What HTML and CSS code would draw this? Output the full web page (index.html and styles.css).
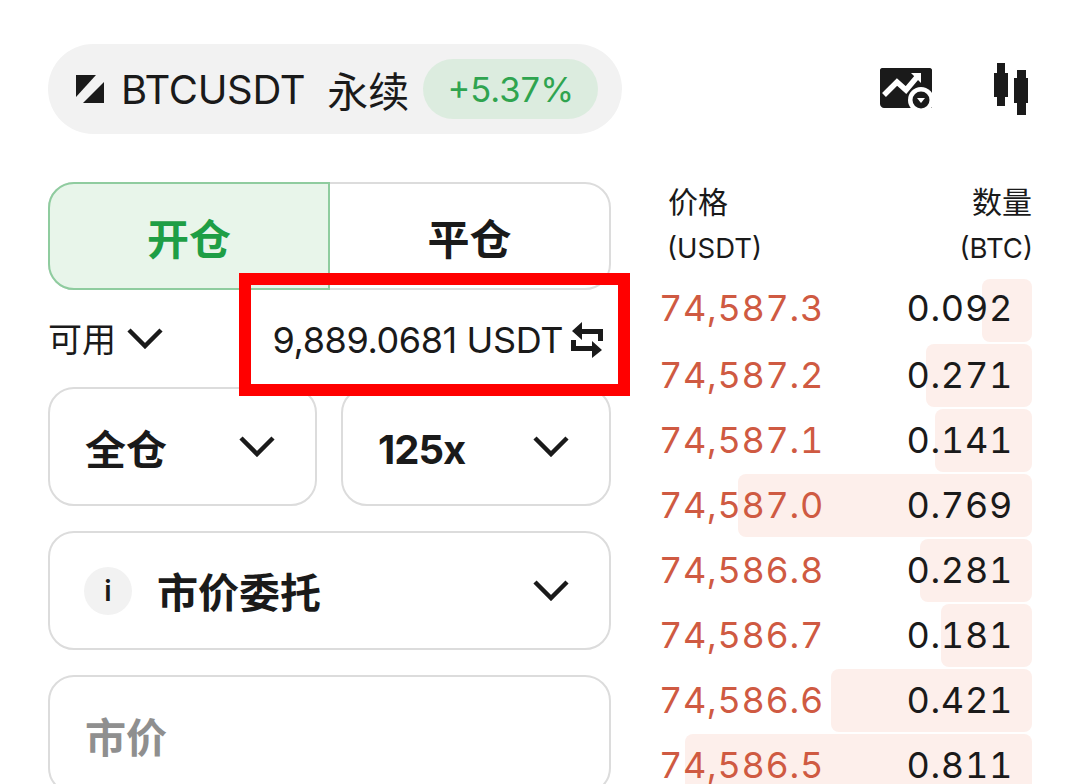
FILE: index.html
```html
<!DOCTYPE html>
<html lang="zh">
<head>
<meta charset="utf-8">
<title>BTCUSDT</title>
<link rel="stylesheet" href="styles.css">
</head>
<body>
<main class="page">
  <header class="top">
    <div class="pill">
      <svg class="logo" viewBox="0 0 28 28"><path d="M0 0H20L0 22Z"/><path d="M28 7V28H7Z"/></svg>
      <span class="sym">BTCUSDT</span>
      <span class="perp">永续</span>
      <span class="badge">+5.37%</span>
    </div>
    <div class="tools">
      <svg class="tool-chart" viewBox="0 0 52 42"><path class="ink" d="M0 2C0 1 1 0 2 0H50C51 0 52 1 52 2V40H4C2 40 0 38 0 36Z"/><circle class="ring" cx="41" cy="32" r="13"/><path class="line" d="M4 27L17 14L26 22L37 9"/><path class="arrowhead" d="M31 5H41V15Z"/><circle class="ink" cx="41" cy="32" r="8.5"/><path class="arrowhead" d="M37 30H45L41 35Z"/></svg>
      <svg class="tool-candle" viewBox="0 0 36 52"><path class="ink" d="M3 0H11V10H14V34H11V43H3V34H0V10H3Z"/><path class="ink" d="M23 7H32V15H34V40H32V52H23V40H20V15H23Z"/></svg>
    </div>
  </header>
  <div class="columns">
    <section class="form">
      <div class="tabs">
        <div class="tab tab-on">开仓</div>
        <div class="tab">平仓</div>
      </div>
      <div class="avail">
        <div class="avail-l">可用<svg class="chev" viewBox="0 0 36 22"><path d="M2 3L18 19L34 3"/></svg></div>
        <div class="avail-r">9,889.0681 USDT<svg class="swap" viewBox="0 0 33 36"><path d="M1 9L11 0V7H32V19H27V12H11V18Z"/><path d="M0 18H5V24H21V19L31 28L21 36V29H0Z"/></svg></div>
      </div>
      <div class="two">
        <div class="field"><b>全仓</b><svg class="chev" viewBox="0 0 36 22"><path d="M2 3L18 19L34 3"/></svg></div>
        <div class="field field-num"><b>125x</b><svg class="chev" viewBox="0 0 36 22"><path d="M2 3L18 19L34 3"/></svg></div>
      </div>
      <div class="field field-order">
        <span class="info">i</span><b class="order-name">市价委托</b><svg class="chev" viewBox="0 0 36 22"><path d="M2 3L18 19L34 3"/></svg>
      </div>
      <div class="field field-market"><b>市价</b></div>
    </section>
    <section class="book">
      <div class="book-head">
        <div><div>价格</div><div class="unit">(USDT)</div></div>
        <div class="right"><div>数量</div><div class="unit unit-r">(BTC)</div></div>
      </div>
      <div class="row row-first"><i class="bar" style="width:50px"></i><span class="price">74,587.3</span><span class="qty">0.092</span></div>
      <div class="row"><i class="bar" style="width:106px"></i><span class="price">74,587.2</span><span class="qty">0.271</span></div>
      <div class="row"><i class="bar" style="width:97px"></i><span class="price">74,587.1</span><span class="qty">0.141</span></div>
      <div class="row"><i class="bar" style="width:294px"></i><span class="price">74,587.0</span><span class="qty">0.769</span></div>
      <div class="row"><i class="bar" style="width:112px"></i><span class="price">74,586.8</span><span class="qty">0.281</span></div>
      <div class="row"><i class="bar" style="width:91px"></i><span class="price">74,586.7</span><span class="qty">0.181</span></div>
      <div class="row"><i class="bar" style="width:201px"></i><span class="price">74,586.6</span><span class="qty">0.421</span></div>
      <div class="row"><i class="bar" style="width:347px"></i><span class="price">74,586.5</span><span class="qty">0.811</span></div>
    </section>
  </div>
</main>
<div class="redbox"></div>
</body>
</html>
```
FILE: styles.css
```css
* { box-sizing: border-box; }
html, body { margin: 0; height: 784px; overflow: hidden; background: #fff; }
body { position: relative; font-family: Inter, "Noto Sans CJK SC", sans-serif; color: #1a1a1a; }
.page { padding: 44px 48px 0; }

.top { display: flex; justify-content: space-between; align-items: center; height: 90px; }
.pill { display: flex; align-items: center; width: 574px; height: 90px; padding-left: 28px; border-radius: 45px; background: #f2f2f2; }
.logo { width: 28px; height: 28px; fill: #1a1a1a; }
.sym { margin-left: 17px; font-size: 40px; letter-spacing: -0.35px; }
.perp { margin-left: 22px; font-size: 41px; }
.badge { display: flex; align-items: center; justify-content: center; width: 175px; height: 60px; margin-left: 14px; border-radius: 30px; background: #dcecdf; color: #2fa44f; font-size: 34.5px; }
.tools { display: flex; align-items: center; gap: 62px; padding-right: 2px; }
.tool-chart { width: 52px; height: 42px; }
.tool-candle { width: 36px; height: 52px; }
.ink { fill: #1a1a1a; }
.ring { fill: #fff; }
.line { fill: none; stroke: #fff; stroke-width: 5.5; }
.arrowhead { fill: #fff; }

.columns { display: flex; margin-top: 48px; }
.form { flex: 0 0 563px; }
.book { flex: 0 0 371px; margin-left: 50px; }

.tabs { display: flex; height: 108px; border: 2px solid #dcdcdc; border-radius: 26px; }
.tab { flex: 1; display: flex; align-items: center; justify-content: center; font-size: 42px; font-weight: 700; }
.tab-on { flex: 0 0 282px; margin: -2px 0 -2px -2px; border: 2px solid #8fcc9f; border-radius: 26px 0 0 26px; background: #e8f5ea; color: #1e9e45; }

.avail { display: flex; justify-content: space-between; align-items: center; height: 97px; font-size: 34px; }
.avail-l { display: flex; align-items: center; gap: 11px; margin-top: -2px; }
.avail-r { display: flex; align-items: center; gap: 8px; margin-top: 3px; padding-right: 7px; font-size: 36px; letter-spacing: -0.4px; }
.swap { width: 33px; height: 36px; fill: #1a1a1a; }

.two { display: flex; gap: 24px; }
.field { display: flex; align-items: center; justify-content: space-between; height: 119px; padding: 0 40px 0 35px; border: 2px solid #dcdcdc; border-radius: 26px; font-size: 41px; }
.field b { font-weight: 700; }
.field .chev { margin-top: -1px; }
.two .field { flex: 1; }
.two .field:first-child { flex: 0 0 269px; }
.field-num b { margin-top: 5px; letter-spacing: -1px; font-size: 40px; }
.field-order { margin-top: 25px; justify-content: flex-start; padding-left: 34px; }
.field-market { margin-top: 25px; color: #8f8f8f; }
.info { display: flex; align-items: center; justify-content: center; width: 48px; height: 48px; border-radius: 50%; background: #f2f2f2; font-size: 28px; font-weight: 600; }
.order-name { margin: -2px 0 0 25px; }
.field-order .chev { margin-left: auto; }
.chev { width: 36px; height: 22px; fill: none; stroke: #1a1a1a; stroke-width: 4.5; }

.book-head { display: flex; justify-content: space-between; height: 98px; margin-top: -2px; padding: 0 0 0 7px; font-size: 30px; line-height: 44px; }
.unit { margin: 2px 0 0 -1px; font-size: 27.5px; }
.unit-r { margin-right: -1px; }
.right { text-align: right; }
.row { position: relative; display: flex; align-items: center; justify-content: space-between; height: 65px; padding: 0 19px 2px 0; font-size: 36px; line-height: 36px; font-variant-numeric: tabular-nums; letter-spacing: 0.7px; }
.row-first { padding-bottom: 5px; }
.bar { position: absolute; top: 1px; right: 0; bottom: 1px; border-radius: 8px; background: #fdefeb; }
.price { position: relative; margin-left: -2px; color: #cf5a42; }
.qty { position: relative; }

.redbox { position: absolute; left: 239px; top: 273px; width: 391px; height: 123px; border: 12px solid #f00; }
```
